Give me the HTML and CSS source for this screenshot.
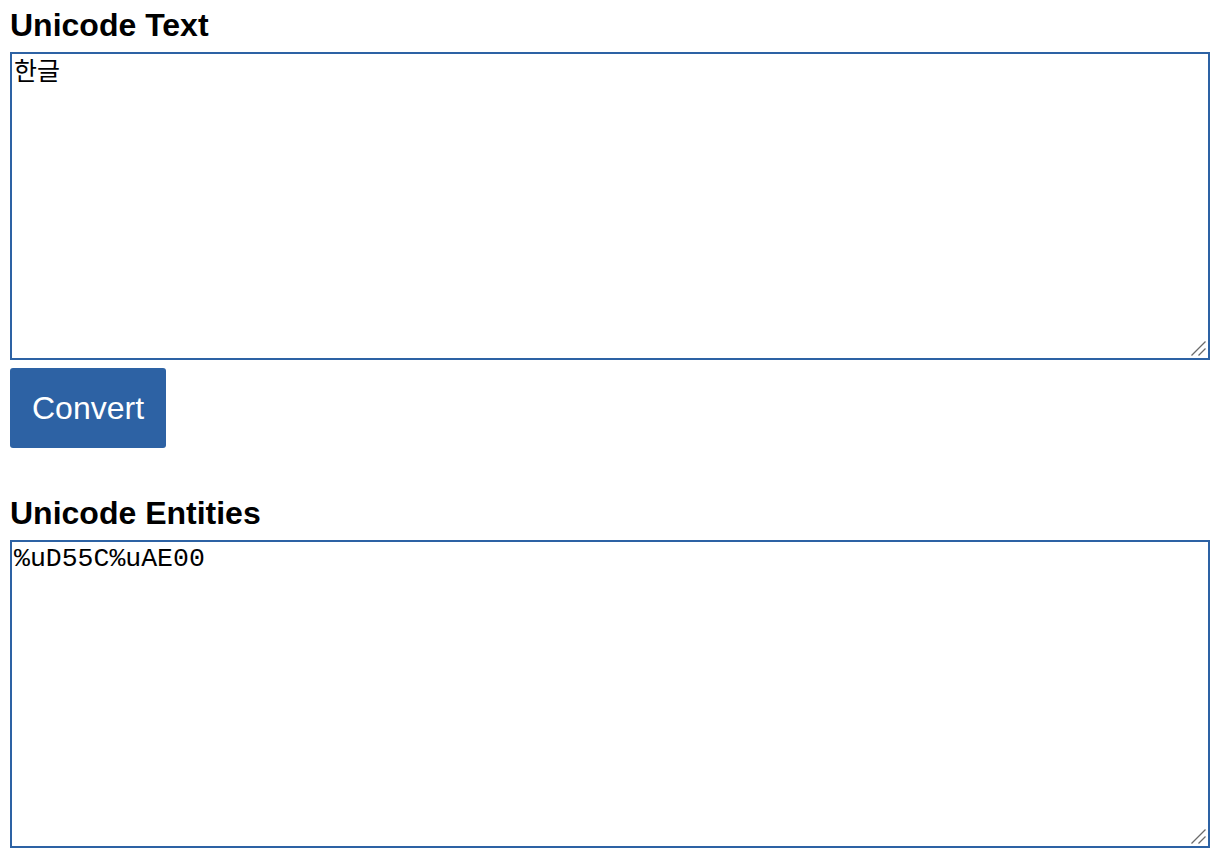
FILE: index.html
```html
<!DOCTYPE html>
<html>
<head>
    <title>Unicode Converter</title>
    <link rel="stylesheet" href="styles.css">
</head>
<body>
    <main class="converter">
        <h2 class="section-title">Unicode Text</h2>
        <div class="text-frame">
            <textarea class="text-box text-input">한글</textarea>
            <svg class="grip" width="16" height="16" viewBox="0 0 16 16"><path d="M1.5 15.5 L15.5 1.5 M8.5 15.5 L15.5 8.5" stroke="#6B6B6B" stroke-width="1.3" fill="none"/></svg>
        </div>
        <button class="convert-button">Convert</button>

        <h2 class="section-title section-title-result">Unicode Entities</h2>
        <div class="text-frame">
            <textarea class="text-box text-output">%uD55C%uAE00</textarea>
            <svg class="grip" width="16" height="16" viewBox="0 0 16 16"><path d="M1.5 15.5 L15.5 1.5 M8.5 15.5 L15.5 8.5" stroke="#6B6B6B" stroke-width="1.3" fill="none"/></svg>
        </div>
    </main>
</body>
</html>
```

FILE: styles.css
```css
body {
    margin: 0;
    background-color: #FFFFFF;
    color: #000000;
    font-family: "Liberation Sans", Arial, sans-serif;
}
.converter {
    display: flex;
    flex-direction: column;
    align-items: flex-start;
    padding: 7px 10px 0 10px;
}
.section-title {
    margin: 0 0 8px 0;
    font-size: 32px;
    line-height: 37px;
    font-weight: bold;
}
.section-title-result {
    margin-top: 47px;
}
.text-frame {
    position: relative;
    width: 1200px;
    height: 308px;
}
.text-box {
    display: block;
    box-sizing: border-box;
    width: 100%;
    height: 100%;
    margin: 0;
    padding: 2px 2px;
    border: 2px solid #2D62A4;
    border-radius: 0;
    outline: none;
    resize: none;
    color: #000000;
    background-color: #FFFFFF;
}
.grip {
    position: absolute;
    right: 4px;
    bottom: 4px;
}
.text-input {
    font-family: "Liberation Sans", "Noto Sans CJK KR", sans-serif;
    font-size: 25px;
    line-height: 30px;
}
.text-output {
    font-family: "Liberation Mono", "Courier New", monospace;
    font-size: 26.5px;
    line-height: 30px;
}
.convert-button {
    margin-top: 8px;
    padding: 21px 22px;
    border: none;
    border-radius: 3px;
    background-color: #2D62A4;
    color: #FFFFFF;
    font-family: "Liberation Sans", Arial, sans-serif;
    font-size: 32px;
    line-height: 38px;
    cursor: pointer;
}
```
